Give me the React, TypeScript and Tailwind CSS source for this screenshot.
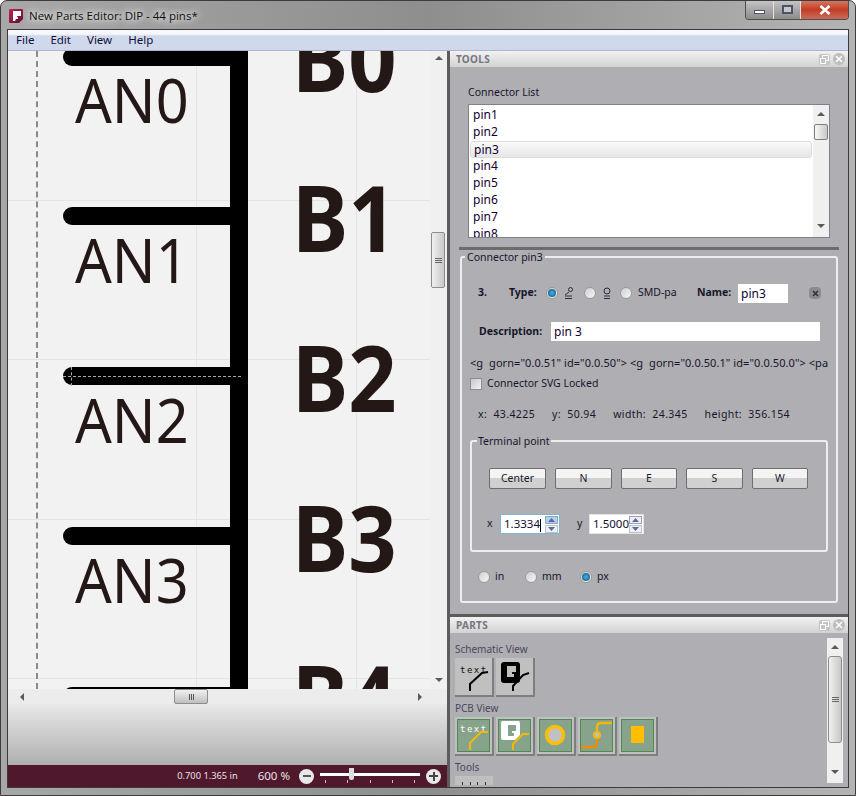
import React from 'react';

const pins = [
  { an: 'AN0', b: 'B0', y: -3 },
  { an: 'AN1', b: 'B1', y: 156 },
  { an: 'AN2', b: 'B2', y: 316 },
  { an: 'AN3', b: 'B3', y: 476 },
  { an: '', b: 'B4', y: 636 },
];

const connectors = ['pin1', 'pin2', 'pin3', 'pin4', 'pin5', 'pin6', 'pin7', 'pin8'];

const Logo = () => (
  <svg width="16" height="16" viewBox="0 0 16 16">
    <defs>
      <linearGradient id="logoBg" x1="0" y1="0" x2="1" y2="1">
        <stop offset="0" stopColor="#c02458" />
        <stop offset="1" stopColor="#5e0e2c" />
      </linearGradient>
    </defs>
    <path d="M2 1h12a1 1 0 0 1 1 1v9l-4 4H2a1 1 0 0 1-1-1V2a1 1 0 0 1 1-1z" fill="url(#logoBg)" />
    <path d="M5 3h8v5H9v1h1v2H8l-1 2H5z" fill="#fff" />
  </svg>
);

const Radio = ({ on = false }: { on?: boolean }) => (
  <span className="w-[12px] h-[12px] rounded-full border border-[#9a9a9e] bg-gradient-to-br from-[#cfcfd1] to-[#f8f8f8] flex items-center justify-center shrink-0">
    {on && <span className="w-[8px] h-[8px] rounded-full bg-[radial-gradient(circle,#48b4e4,#0b4a78)]" />}
  </span>
);

const Arrow = ({ dir }: { dir: 'up' | 'down' | 'left' | 'right' }) => {
  const d = { up: 'M0 5L4 1L8 5Z', down: 'M0 1L4 5L8 1Z', left: 'M5 0L1 4L5 8Z', right: 'M1 0L5 4L1 8Z' }[dir];
  return (
    <svg width="8" height="8" viewBox="0 0 8 8" className="shrink-0">
      <path d={d} fill="#5a5a5a" />
    </svg>
  );
};

const DockButtons = () => (
  <div className="flex items-center gap-[3px]">
    <span className="w-[11px] h-[11px] bg-[#c4c4c4] rounded-[2px] flex items-center justify-center">
      <svg width="9" height="9" viewBox="0 0 9 9">
        <rect x="2.5" y="0.5" width="6" height="5" fill="none" stroke="#fff" />
        <rect x="0.5" y="3.5" width="5" height="5" fill="#c4c4c4" stroke="#fff" />
      </svg>
    </span>
    <span className="w-[12px] h-[12px] bg-[#bdbdbd] rounded-full flex items-center justify-center">
      <svg width="8" height="8" viewBox="0 0 8 8">
        <path d="M1 1L7 7M7 1L1 7" stroke="#fff" strokeWidth="1.6" />
      </svg>
    </span>
  </div>
);

const DockHeader = ({ title }: { title: string }) => (
  <div className="h-[16px] shrink-0 bg-gradient-to-b from-[#f2f2f2] to-[#d2d2d2] flex items-center justify-between pl-[6px] pr-[3px]">
    <span className="text-[10px] font-bold text-[#76767e] tracking-[0.3px]">{title}</span>
    <DockButtons />
  </div>
);

const PushButton = ({ label, w }: { label: string; w: string }) => (
  <button className={`${w} h-[21px] rounded-[2px] border border-[#6e6e6e] bg-gradient-to-b from-[#f4f4f4] from-50% to-[#d0d0d0] to-50% text-[10.5px] text-[#1a1a2a] flex items-center justify-center`}>
    {label}
  </button>
);

const Spin = ({ value, w, focus = false }: { value: string; w: string; focus?: boolean }) => (
  <div className={`${w} h-[20px] bg-white flex items-center pl-[3px] pr-[1px] border ${focus ? 'border-[#7eb4d8]' : 'border-[#e4e4e4]'}`}>
    <span className="text-[11.5px] text-[#101030] flex-1 relative">
      {value}
      {focus && <span className="inline-block w-px h-[13px] bg-black align-middle" />}
    </span>
    <div className="flex flex-col gap-px w-[13px]">
      <span className={`h-[8px] border border-[#9ca0b0] flex items-center justify-center ${focus ? 'bg-[#a8d4f0]' : 'bg-[#efeff2]'}`}>
        <svg width="7" height="4" viewBox="0 0 7 4"><path d="M0 4L3.5 0L7 4Z" fill="#5a68a8" /></svg>
      </span>
      <span className="h-[8px] border border-[#c0c0c8] bg-[#efeff2] flex items-center justify-center">
        <svg width="7" height="4" viewBox="0 0 7 4"><path d="M0 0L3.5 4L7 0Z" fill="#5a68a8" /></svg>
      </span>
    </div>
  </div>
);

const Tile = ({ pcb = false, children }: { pcb?: boolean; children: React.ReactNode }) => (
  <div className="w-[39px] h-[39px] bg-[#7e7e7e] pr-[2px] pb-[2px] shrink-0">
    <div className={`w-[37px] h-[37px] bg-[#c0c0c0] ${pcb ? 'p-[2px]' : ''}`}>
      <svg width={pcb ? 33 : 37} height={pcb ? 33 : 37} viewBox={pcb ? '2 2 33 33' : '0 0 37 37'} className={pcb ? 'bg-[#87a38b] outline outline-1 -outline-offset-1 outline-[#4f8a50]' : ''}>
        {children}
      </svg>
    </div>
  </div>
);

const MONO = { fontFamily: '"DejaVu Sans Mono", monospace', letterSpacing: '1.5px' };

export default function App() {
  return (
    <div className="relative w-[856px] h-[796px] overflow-hidden bg-gradient-to-r from-[#a8a8a8] via-[#8e8e8e] to-[#b4b4b4] rounded-t-[7px] border border-[#3c3c3c] flex flex-col px-[6px] pb-[7px]" style={{ fontFamily: '"Noto Sans", sans-serif' }}>
      {/* title bar */}
      <div className="h-[28px] shrink-0 flex items-start relative">
        <div className="flex items-center gap-[5px] pt-[7px] pl-[1px]">
          <Logo />
          <span className="text-[11.5px] text-[#111] leading-[16px]" style={{ fontFamily: '"Open Sans", sans-serif', textShadow: '0 0 6px #fff, 0 0 10px #fff' }}>New Parts Editor: DIP - 44 pins*</span>
        </div>
        <div className="absolute right-0 -top-px flex h-[20px] rounded-b-[4px] overflow-hidden border border-t-0 border-[#4e4e4e]">
          <span className="w-[28px] bg-gradient-to-b from-[#c8c8c8] via-[#a8a8a8] to-[#8c8c8c] border-r border-[#e4e4e4] flex items-center justify-center pt-[5px]">
            <span className="w-[11px] h-[4px] bg-white border border-[#4e5468]" />
          </span>
          <span className="w-[27px] bg-gradient-to-b from-[#c8c8c8] via-[#a8a8a8] to-[#8c8c8c] border-r border-[#e4e4e4] flex items-center justify-center">
            <span className="w-[11px] h-[9px] bg-[#c8c8cc] border-2 border-[#4e5468]" />
          </span>
          <span className="w-[47px] bg-gradient-to-b from-[#d47c68] via-[#c43c22] to-[#c86a58] flex items-center justify-center">
            <svg width="12" height="10" viewBox="0 0 12 10"><path d="M1.5 1L10.5 9M10.5 1L1.5 9" stroke="#fff" strokeWidth="2.6" /></svg>
          </span>
        </div>
      </div>

      {/* client area */}
      <div className="flex-1 min-h-0 flex flex-col border border-[#3a3a3a] bg-[#d4d4d4]">
        <nav className="h-[21px] shrink-0 flex items-center gap-[16px] pl-[8px] text-[11.5px] text-[#10103a] bg-gradient-to-b from-[#f6f8fc] from-20% to-[#d0d8ec] to-30% border-b border-[#b0b4c8]">
          <span>File</span>
          <span>Edit</span>
          <span>View</span>
          <span>Help</span>
        </nav>

        <div className="flex-1 min-h-0 flex">
          {/* left column */}
          <div className="w-[439px] shrink-0 flex flex-col">
            <div className="h-[638px] shrink-0 flex">
              {/* canvas */}
              <div className="relative w-[422px] h-full bg-[#f2f2f2] overflow-hidden">
                <div className="absolute left-[188px] top-0 bottom-0 w-px bg-[#e4e4e4]" />
                <div className="absolute left-[348px] top-0 bottom-0 w-px bg-[#e4e4e4]" />
                <div className="absolute left-0 right-0 top-[149px] h-px bg-[#e4e4e4]" />
                <div className="absolute left-0 right-0 top-[308px] h-px bg-[#e4e4e4]" />
                <div className="absolute left-0 right-0 top-[468px] h-px bg-[#e4e4e4]" />
                <div className="absolute left-0 right-0 top-[627px] h-px bg-[#e4e4e4]" />
                <div className="absolute left-[28px] top-0 bottom-0 border-l-2 border-dashed border-[#8a8a8a]" />
                <div className="absolute left-[222px] top-0 bottom-0 w-[18px] bg-black" />
                {pins.map((p, i) => (
                  <React.Fragment key={p.b}>
                    <div className="absolute left-[55px] w-[180px] h-[18px] rounded-l-full bg-black" style={{ top: p.y }} />
                    {p.an && (
                      <span className="absolute left-[67px] origin-left scale-x-[0.93] text-[62px] leading-[62px] text-[#231815]" style={{ top: 17 + 160 * i }}>{p.an}</span>
                    )}
                    <span className="absolute left-[284px] origin-left scale-x-[0.93] text-[91px] leading-[91px] font-bold text-[#231815]" style={{ top: -39 + 160 * i }}>{p.b}</span>
                  </React.Fragment>
                ))}
                <div className="absolute left-[55px] top-[325px] w-[178px] border-t border-dashed border-[#a8a8a8]" />
                <div className="absolute left-[63px] top-[316px] h-[19px] border-l border-dashed border-[#a8a8a8]" />
              </div>
              {/* vertical scrollbar */}
              <div className="w-[17px] h-full bg-[#f0f0f0] flex flex-col items-center justify-between py-[4px] relative">
                <Arrow dir="up" />
                <Arrow dir="down" />
                <div className="absolute left-[1px] top-[181px] w-[14px] h-[56px] rounded-[2px] border border-[#8c8c8c] bg-gradient-to-r from-[#f0f0f0] to-[#c8c8c8] flex flex-col items-center justify-center gap-px">
                  <span className="w-[7px] h-px bg-[#666]" />
                  <span className="w-[7px] h-px bg-[#666]" />
                  <span className="w-[7px] h-px bg-[#666]" />
                </div>
              </div>
            </div>
            {/* horizontal scrollbar */}
            <div className="h-[15px] shrink-0 bg-[#ececec] flex items-center justify-between pl-[11px] pr-[22px] relative">
              <Arrow dir="left" />
              <Arrow dir="right" />
              <div className="absolute left-[166px] top-0 w-[34px] h-[15px] rounded-[2px] border border-[#8c8c8c] bg-gradient-to-b from-[#f0f0f0] to-[#c0c0c0] flex items-center justify-center gap-px">
                <span className="w-px h-[6px] bg-[#555]" />
                <span className="w-px h-[6px] bg-[#555]" />
                <span className="w-px h-[6px] bg-[#555]" />
              </div>
            </div>
            <div className="flex-1 bg-gradient-to-b from-[#e8e8e8] to-[#b0b0b0]" />
            {/* status bar */}
            <div className="h-[22px] shrink-0 bg-[#50182c] flex items-center justify-end pr-[6px] text-[#e8e0e4]">
              <span className="text-[9.3px] mr-[20px]">0.700 1.365 in</span>
              <span className="text-[11.5px] mr-[9px]">600 %</span>
              <span className="w-[15px] h-[15px] rounded-full bg-[#e8e8e8] flex items-center justify-center">
                <span className="w-[8px] h-[2px] bg-[#555]" />
              </span>
              <div className="relative w-[100px] h-[3px] bg-white ml-[6px] mr-[6px] -mt-[4px]">
                <span className="absolute left-[29px] -top-[5px] w-[5px] h-[12px] bg-[#dcdcdc] rounded-b-[2px]" />
                <div className="absolute left-[5px] right-[5px] top-[7px] flex justify-between">
                  <span className="w-px h-[3px] bg-[#c8c0c4]" />
                  <span className="w-px h-[3px] bg-[#c8c0c4]" />
                  <span className="w-px h-[3px] bg-[#c8c0c4]" />
                  <span className="w-px h-[3px] bg-[#c8c0c4]" />
                  <span className="w-px h-[3px] bg-[#c8c0c4]" />
                </div>
              </div>
              <span className="relative w-[15px] h-[15px] rounded-full bg-[#e8e8e8] flex items-center justify-center">
                <span className="w-[9px] h-[2px] bg-[#444]" />
                <span className="absolute w-[2px] h-[9px] bg-[#444]" />
              </span>
            </div>
          </div>

          {/* splitter */}
          <div className="w-[3px] shrink-0 bg-[#5c5c5c]" />

          {/* right column */}
          <div className="flex-1 min-w-0 flex flex-col bg-[#afaeb3]">
            <DockHeader title="TOOLS" />
            <div className="h-[547px] shrink-0 px-[9px] flex flex-col text-[10.5px] text-[#16162a]">
              <div className="pl-[9px] mt-[17px] h-[16px] leading-[16px]">Connector List</div>
              <div className="ml-[9px] mt-[4px] w-[362px] h-[134px] shrink-0 bg-white border border-[#80808a] flex overflow-hidden">
                <div className="flex-1 p-[1px] pt-[2px] overflow-hidden">
                  {connectors.map(c => (
                    <div key={c} className={`h-[17px] leading-[16px] pl-[3px] text-[12px] rounded-[3px] text-[#100030] ${c === 'pin3' ? 'bg-gradient-to-b from-[#fafafa] to-[#e6e6e6] border border-[#dcdcdc] leading-[14px] pl-[2px]' : ''}`}>{c}</div>
                  ))}
                </div>
                <div className="w-[16px] bg-[#f0f0f0] flex flex-col items-center justify-between py-[6px] relative">
                  <Arrow dir="up" />
                  <Arrow dir="down" />
                  <div className="absolute left-px top-[19px] w-[14px] h-[16px] rounded-[2px] border border-[#808080] bg-gradient-to-r from-[#f8f8f8] to-[#c8c8c8]" />
                </div>
              </div>
              <div className="mt-[9px] h-[3px] shrink-0 bg-[#6c6c6c]" />

              {/* connector group */}
              <div className="relative mt-[6px] w-[378px] h-[347px] shrink-0 ml-px border-2 border-[#eeeef0] rounded-[3px] px-[8px]">
                <span className="absolute left-[3px] -top-[8px] bg-[#afaeb3] px-[2px] leading-[14px]">Connector pin3</span>
                <div className="flex items-center h-[20px] mt-[25px] pl-[8px]">
                  <b className="w-[31px]">3.</b>
                  <b className="mr-[6px] w-[31px]">Type:</b>
                  <Radio on />
                  <svg width="12" height="14" viewBox="0 0 12 14" className="ml-[5px] mr-[9px]">
                    <circle cx="7.5" cy="3.5" r="2" stroke="#2c2c34" fill="none" />
                    <path d="M6 6L2 9M2 10h7M2 12.5h7" stroke="#2c2c34" fill="none" />
                  </svg>
                  <Radio />
                  <svg width="12" height="14" viewBox="0 0 12 14" className="ml-[5px] mr-[7px]">
                    <circle cx="6" cy="5" r="3" stroke="#2c2c34" fill="none" />
                    <path d="M3 10h6M3 12.5h6" stroke="#2c2c34" fill="none" />
                  </svg>
                  <Radio />
                  <span className="ml-[6px] w-[59px]">SMD-pa</span>
                  <b className="w-[41px]">Name:</b>
                  <span className="w-[50px] h-[19px] bg-white pl-[3px] text-[12px] leading-[20px] text-[#100030]">pin3</span>
                  <span className="ml-[21px] w-[12px] h-[12px] rounded-[4px] bg-[#8c8c90] flex items-center justify-center">
                    <svg width="7" height="7" viewBox="0 0 7 7"><path d="M1 1L6 6M6 1L1 6" stroke="#333" strokeWidth="1.6" /></svg>
                  </span>
                </div>
                <div className="flex items-center h-[19px] mt-[19px] pl-[9px]">
                  <b className="w-[72px]">Description:</b>
                  <span className="w-[269px] h-[19px] bg-white pl-[3px] text-[12px] leading-[20px] text-[#100030]">pin 3</span>
                </div>
                <div className="mt-[15px] h-[14px] leading-[14px] text-[11px] tracking-[0.07px] whitespace-pre overflow-hidden">{'<g  gorn="0.0.51" id="0.0.50"> <g  gorn="0.0.50.1" id="0.0.50.0"> <pa'}</div>
                <div className="mt-[7px] flex items-center gap-[5px] h-[14px]">
                  <span className="w-[12px] h-[12px] border border-[#8e8e92] bg-gradient-to-br from-[#c8c8c8] to-[#f4f4f4]" />
                  <span>Connector SVG Locked</span>
                </div>
                <div className="mt-[15px] h-[16px] leading-[16px] pl-[8px] flex gap-[17px] tracking-[0.4px]">
                  <span>x:&nbsp; 43.4225</span>
                  <span>y:&nbsp; 50.94</span>
                  <span>width:&nbsp; 24.345</span>
                  <span>height:&nbsp; 356.154</span>
                </div>

                {/* terminal point group */}
                <div className="relative mt-[18px] w-[358px] h-[112px] border-2 border-[#eeeef0] rounded-[3px]">
                  <span className="absolute left-[5px] -top-[8px] bg-[#afaeb3] px-[1px] leading-[14px]">Terminal point</span>
                  <div className="flex mt-[26px] ml-[17px] gap-[9px]">
                    <PushButton label="Center" w="w-[57px]" />
                    <PushButton label="N" w="w-[57px]" />
                    <PushButton label="E" w="w-[56px]" />
                    <PushButton label="S" w="w-[57px]" />
                    <PushButton label="W" w="w-[56px]" />
                  </div>
                  <div className="flex items-center mt-[25px] ml-[15px]">
                    <span className="w-[13px]">x</span>
                    <Spin value="1.3334" w="w-[60px]" focus />
                    <span className="ml-[17px] w-[12px]">y</span>
                    <Spin value="1.5000" w="w-[55px]" />
                  </div>
                </div>

                <div className="flex items-center mt-[17px] ml-[8px] h-[16px]">
                  <Radio />
                  <span className="ml-[5px] w-[30px]">in</span>
                  <Radio />
                  <span className="ml-[5px] w-[38px]">mm</span>
                  <Radio on />
                  <span className="ml-[5px]">px</span>
                </div>
              </div>
            </div>

            <div className="h-[3px] shrink-0 bg-[#5c5c5c]" />
            <DockHeader title="PARTS" />
            <div className="flex-1 min-h-0 flex relative">
              <div className="flex-1 min-w-0 overflow-hidden pl-[5px] text-[10px] text-[#48485a] leading-[16px]">
                <div className="mt-[8px]">Schematic View</div>
                <div className="flex gap-[2px] mt-px">
                  <Tile>
                    <text x="5" y="15" fontSize="9" fill="#111" style={MONO}>text</text>
                    <path d="M15 33V26L27 15L33 14" stroke="#000" strokeWidth="2" fill="none" />
                  </Tile>
                  <Tile>
                    <rect x="5" y="4" width="19" height="21" rx="3" fill="#000" />
                    <path d="M11 8h9v6h-4v2h2v3h-7z" fill="#c0c0c0" />
                    <path d="M17 33V28L27 17L33 15" stroke="#000" strokeWidth="2" fill="none" />
                  </Tile>
                </div>
                <div className="mt-[3px]">PCB View</div>
                <div className="flex gap-[2px] mt-px">
                  <Tile pcb>
                    <text x="5" y="15" fontSize="9" fill="#fff" style={MONO}>text</text>
                    <path d="M15 33V26L26 15H33" stroke="#f5b800" strokeWidth="2" fill="none" />
                  </Tile>
                  <Tile pcb>
                    <path d="M7 4h15a2 2 0 0 1 2 2v12l-5 5H7a2 2 0 0 1-2-2V6a2 2 0 0 1 2-2z" fill="#fff" />
                    <path d="M12 8h8v6h-4v2h2v3h-6z" fill="#87a38b" />
                    <path d="M17 33V27L27 17H33" stroke="#f5b800" strokeWidth="2" fill="none" />
                  </Tile>
                  <Tile pcb>
                    <circle cx="18" cy="18" r="8.5" fill="#c0c0c0" stroke="#ffbf00" strokeWidth="3.5" />
                  </Tile>
                  <Tile pcb>
                    <path d="M3 30h12q4 0 4-4V22" stroke="#f58a00" strokeWidth="2.4" fill="none" />
                    <path d="M19 14V10q0-4 4-4H34" stroke="#f5b800" strokeWidth="2.4" fill="none" />
                    <circle cx="19" cy="18" r="3.2" fill="#c0c0c0" stroke="#f5b800" strokeWidth="1.8" />
                  </Tile>
                  <Tile pcb>
                    <rect x="12" y="9" width="13" height="17" fill="#ffbf00" />
                  </Tile>
                </div>
                <div className="mt-[3px]">Tools</div>
                <div className="mt-px w-[38px] h-[9px] bg-[#c0c0c0] flex justify-around items-end px-[4px]">
                  <span className="w-px h-[3px] bg-[#333]" />
                  <span className="w-px h-[3px] bg-[#333]" />
                  <span className="w-px h-[3px] bg-[#333]" />
                  <span className="w-px h-[3px] bg-[#333]" />
                </div>
              </div>
              <div className="w-[16px] h-[145px] mt-[5px] mr-[5px] shrink-0 bg-[#f0f0f0] flex flex-col items-center justify-between py-[6px] relative">
                <Arrow dir="up" />
                <Arrow dir="down" />
                <div className="absolute left-px top-[18px] w-[14px] h-[87px] rounded-[3px] border border-[#8c8c8c] bg-gradient-to-r from-[#f0f0f0] to-[#c8c8c8] flex flex-col items-center justify-center gap-px">
                  <span className="w-[7px] h-px bg-[#666]" />
                  <span className="w-[7px] h-px bg-[#666]" />
                  <span className="w-[7px] h-px bg-[#666]" />
                </div>
              </div>
            </div>
          </div>
        </div>
      </div>
    </div>
  );
}
